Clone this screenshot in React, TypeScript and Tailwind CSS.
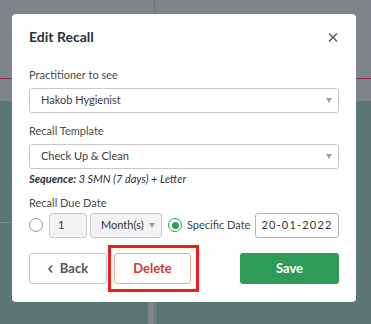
function Caret() {
  return (
    <svg width="6" height="5" viewBox="0 0 6 5" className="shrink-0">
      <path d="M0 0 H6 L3 5 Z" fill="#a0a0a0" />
    </svg>
  )
}

function SelectBox({ value, className = '' }: { value: string; className?: string }) {
  return (
    <div
      className={`flex items-center justify-between rounded-[3px] border border-[#c9c9cc] bg-white pl-[11px] pr-[6px] text-[11px] text-[#3d3d3d] ${className}`}
    >
      <span>{value}</span>
      <Caret />
    </div>
  )
}

export default function App() {
  return (
    <div className="relative h-[324px] w-[371px] overflow-hidden font-['Lato',sans-serif]">
      {/* page behind the modal */}
      <div className="flex h-full flex-col">
        <div className="relative h-[101px] bg-[#808389]">
          <div className="absolute left-[154px] top-0 h-full w-px bg-[#6f7277]" />
          <div className="absolute left-0 right-0 top-[78px] h-px bg-[#8a2b45]" />
        </div>
        <div className="relative flex-1 bg-[#5b7570]">
          <div className="absolute left-0 top-[121px] h-px w-[12px] bg-[#7b918c]" />
          <div className="absolute bottom-0 left-[148px] top-[150px] w-[8px] bg-[#808389]">
            <div className="ml-[6px] h-full w-px bg-[#6f7277]" />
          </div>
        </div>
      </div>

      {/* modal */}
      <div className="absolute left-[12px] top-[14px] w-[344px] rounded-[4px] bg-white px-[17px] pb-[18px] pt-[13px] text-[#444]">
        <div className="flex h-[20px] items-center justify-between">
          <h2 className="text-[14px] font-bold leading-[20px] text-[#2b2f3a]">Edit Recall</h2>
          <svg width="10" height="9" viewBox="0 0 10 9" className="mr-[1px]">
            <path d="M1 0.5 L9 8.5 M9 0.5 L1 8.5" stroke="#555" strokeWidth="1.4" />
          </svg>
        </div>

        <div className="mt-[21px] text-[11px] leading-[14px] text-[#4a4a4a]">Practitioner to see</div>
        <SelectBox value="Hakob Hygienist" className="mt-[6px] h-[25px]" />

        <div className="mt-[11px] text-[11px] leading-[14px] text-[#4a4a4a]">Recall Template</div>
        <SelectBox value="Check Up & Clean" className="mt-[6px] h-[25px]" />

        <div className="mt-[3px] text-[11px] italic leading-[14px] text-[#333]">
          <span className="font-bold">Sequence:</span> 3 SMN (7 days) + Letter
        </div>

        <div className="mt-[10px] text-[11px] leading-[14px] text-[#4a4a4a]">Recall Due Date</div>

        <div className="mt-[2px] flex h-[26px] items-center">
          <span className="h-[14px] w-[14px] shrink-0 rounded-full border border-[#9c9c9c] bg-white" />
          <div className="ml-[6px] flex h-[25px] w-[38px] items-center rounded-[3px] border border-[#c9c9cc] bg-[#f3f3f5] pl-[8px] text-[11px] text-[#333]">
            1
          </div>
          <div className="ml-[3px] flex h-[25px] w-[72px] items-center justify-between rounded-[3px] border border-[#c9c9cc] bg-[#f3f3f5] pl-[10px] pr-[6px] text-[11px] text-[#333]">
            <span>Month(s)</span>
            <Caret />
          </div>
          <span className="ml-[6px] flex h-[14px] w-[14px] shrink-0 items-center justify-center rounded-full border border-[#2e9b58] bg-white">
            <span className="h-[7px] w-[7px] rounded-full bg-[#2e9b58]" />
          </span>
          <span className="ml-[5px] whitespace-nowrap text-[11px] text-[#444]">Specific Date</span>
          <div className="ml-auto flex h-[25px] w-[84px] items-center justify-center rounded-[3px] border border-[#b4b4b8] bg-white text-[11px] tracking-[1.2px] text-[#333]">
            20-01-2022
          </div>
        </div>

        <div className="mt-[15px] flex h-[31px] items-center justify-between">
          <div className="flex h-full gap-[7px]">
            <button className="flex w-[78px] items-center justify-center gap-[7px] rounded-[3px] border border-[#c6c6c6] bg-white text-[13px] font-bold text-[#555]">
              <svg width="5" height="8" viewBox="0 0 5 8">
                <path d="M4 0.5 L1 4 L4 7.5" fill="none" stroke="#555" strokeWidth="1.5" />
              </svg>
              Back
            </button>
            <div className="relative flex">
              <button className="w-[77px] rounded-[3px] border border-[#e8a79e] bg-white text-[13px] font-bold text-[#d03b2c]">
                Delete
              </button>
              <div className="pointer-events-none absolute -bottom-[8px] -left-[6px] -right-[8px] -top-[8px] border-[3px] border-[#f21c1c]" />
            </div>
          </div>
          <button className="h-full w-[99px] rounded-[3px] bg-[#2e9b58] text-[13px] font-bold text-white">Save</button>
        </div>
      </div>
    </div>
  )
}
